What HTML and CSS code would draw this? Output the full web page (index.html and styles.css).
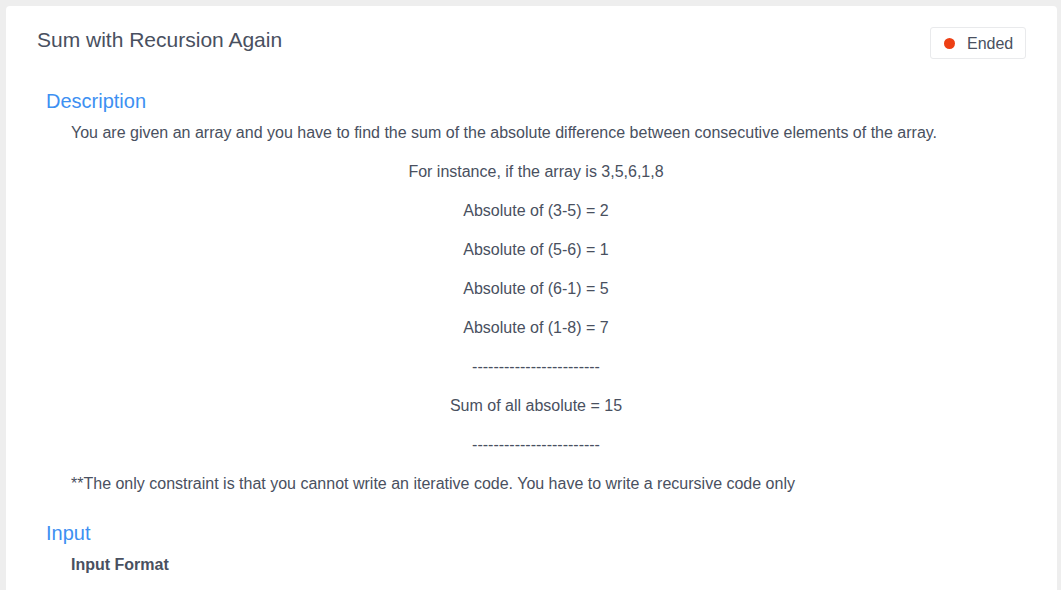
FILE: index.html
```html
<!DOCTYPE html>
<html>
<head>
<meta charset="utf-8">
<link rel="stylesheet" href="styles.css">
</head>
<body>
<div class="card">
  <div class="card-head">
    <h1 class="title">Sum with Recursion Again</h1>
    <div class="tag"><span class="dot"></span><span class="tag-text">Ended</span></div>
  </div>
  <div class="section">
    <h2 class="sec-title">Description</h2>
    <div class="content">
      <p>You are given an array and you have to find the sum of the absolute difference between consecutive elements of the array.</p>
      <p class="center">For instance, if the array is 3,5,6,1,8</p>
      <p class="center">Absolute of (3-5) = 2</p>
      <p class="center">Absolute of (5-6) = 1</p>
      <p class="center">Absolute of (6-1) = 5</p>
      <p class="center">Absolute of (1-8) = 7</p>
      <p class="center">------------------------</p>
      <p class="center">Sum of all absolute = 15</p>
      <p class="center">------------------------</p>
      <p>**The only constraint is that you cannot write an iterative code. You have to write a recursive code only</p>
    </div>
  </div>
  <div class="section">
    <h2 class="sec-title">Input</h2>
    <div class="content">
      <p class="bold">Input Format</p>
    </div>
  </div>
</div>
</body>
</html>
```
FILE: styles.css
```css
html, body {
  margin: 0;
  padding: 0;
  background: #eeeeee;
  font-family: "Liberation Sans", Arial, sans-serif;
  color: #495060;
}
body {
  padding: 6px 4px 0 6px;
  height: 590px;
  box-sizing: border-box;
  overflow: hidden;
}
.card {
  background: #fff;
  border-radius: 4px;
  padding: 24px 31px 20px 31px;
  min-height: 600px;
}
.card-head {
  display: flex;
  justify-content: space-between;
  align-items: flex-start;
  margin-bottom: 30px;
}
.title {
  margin: 0;
  font-size: 21px;
  font-weight: normal;
  line-height: 20px;
  color: #495060;
}
.tag {
  display: flex;
  align-items: center;
  margin-top: -3px;
  padding: 0 11px 0 13px;
  border: 1px solid #e9eaec;
  border-radius: 3px;
  box-sizing: border-box;
  height: 32px;
  width: 96px;
}
.dot {
  width: 11px;
  height: 11px;
  border-radius: 50%;
  background: #ed3f14;
  margin-right: 12px;
}
.tag-text {
  font-size: 16px;
  color: #495060;
  padding-top: 2px;
}
.section {
  padding-left: 9px;
  margin-bottom: 25px;
}
.sec-title {
  margin: 0;
  font-size: 20px;
  font-weight: normal;
  color: #3d90f2;
  line-height: 24px;
}
.content {
  padding: 8px 25px 0 25px;
  font-size: 16px;
}
.content p {
  margin: 0 0 15px 0;
  line-height: 24px;
}
.center {
  text-align: center;
}
.bold {
  font-weight: bold;
}
```
